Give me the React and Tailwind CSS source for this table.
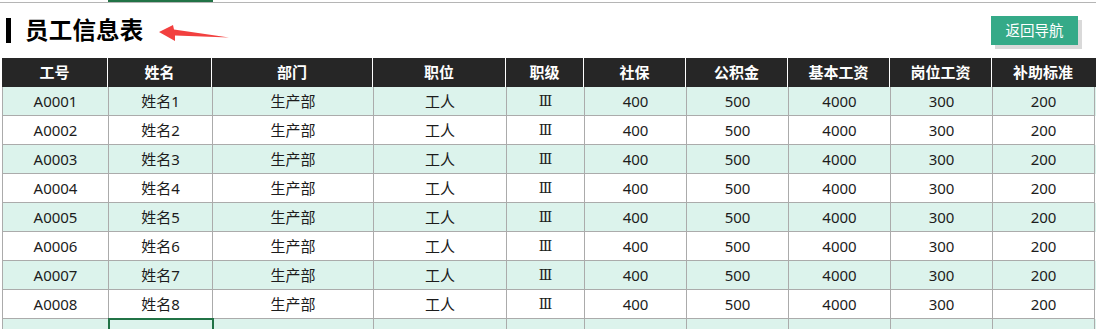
import React from "react";

const headers = ["工号", "姓名", "部门", "职位", "职级", "社保", "公积金", "基本工资", "岗位工资", "补助标准"];

const rows = Array.from({ length: 8 }, (_, i) => [
    `A000${i + 1}`,
    `姓名${i + 1}`,
    "生产部",
    "工人",
    "Ⅲ",
    "400",
    "500",
    "4000",
    "300",
    "200",
]);

const cols = "grid grid-cols-[106px_104px_161px_133px_78px_102px_102px_102px_102px_102px]";
const font = { fontFamily: '"Noto Sans", "Noto Sans CJK SC", sans-serif' };
const serif = { fontFamily: '"DejaVu Serif", "Noto Sans CJK SC", serif' };

function Arrow() {
    return (
        <svg width="74" height="20" viewBox="0 0 74 20" className="ml-[13px] mt-[4px]">
            <path d="M2 9 L16 2 L17 6.5 L72 14.5 L18 12.5 L18 18 Z" fill="#f2403f" />
        </svg>
    );
}

export default function App() {
    return (
        <div className="w-[1096px] h-[329px] overflow-hidden bg-white text-[#1c1c1c]" style={font}>
            {/* top gridline strip */}
            <div className="h-[3px] border-b border-[#b5b5b5]">
                <div className="ml-[108px] w-[105px] h-[2px] bg-[#217346]" />
            </div>

            {/* title row */}
            <div className="h-[55px] flex items-center justify-between pr-[18px]">
                <div className="flex items-center">
                    <div className="ml-[6px] w-[5px] h-[25px] bg-black" />
                    <h1 className="ml-[14px] text-[23.5px] font-bold leading-none text-black tracking-[0.2px]">
                        员工信息表
                    </h1>
                    <Arrow />
                </div>
                <button className="w-[87px] h-[29px] bg-[#35aa88] text-white text-[14.5px] shadow-[4px_4px_0_#d9d9d9]">
                    返回导航
                </button>
            </div>

            {/* table */}
            <div className="ml-[2px]">
                <div className={`${cols} h-[29px] bg-[#262626]`}>
                    {headers.map((h, i) => (
                        <div
                            key={h}
                            className={`flex items-center justify-center text-white text-[15px] font-bold ${
                                i < headers.length - 1 ? "border-r border-white" : ""
                            }`}
                        >
                            {h}
                        </div>
                    ))}
                </div>
                {rows.map((r, ri) => (
                    <div
                        key={ri}
                        className={`${cols} h-[29px] border-l border-[#ababab] ${ri % 2 === 0 ? "bg-[#dcf3ec]" : "bg-white"}`}
                    >
                        {r.map((c, ci) => (
                            <div
                                key={ci}
                                className={`flex items-center justify-center border-r border-b border-[#ababab] ${
                                    ci === 4 ? "text-[14px]" : "text-[15px]"
                                }`}
                                style={ci === 4 ? serif : undefined}
                            >
                                {c}
                            </div>
                        ))}
                    </div>
                ))}
                <div className={`${cols} h-[29px] border-l border-[#ababab] bg-[#dcf3ec]`}>
                    {headers.map((h, ci) => (
                        <div
                            key={h}
                            className={`border-r border-[#ababab] ${
                                ci === 1 ? "relative z-10 outline-2 outline-[#217346] -outline-offset-1" : ""
                            }`}
                        />
                    ))}
                </div>
            </div>
        </div>
    );
}
